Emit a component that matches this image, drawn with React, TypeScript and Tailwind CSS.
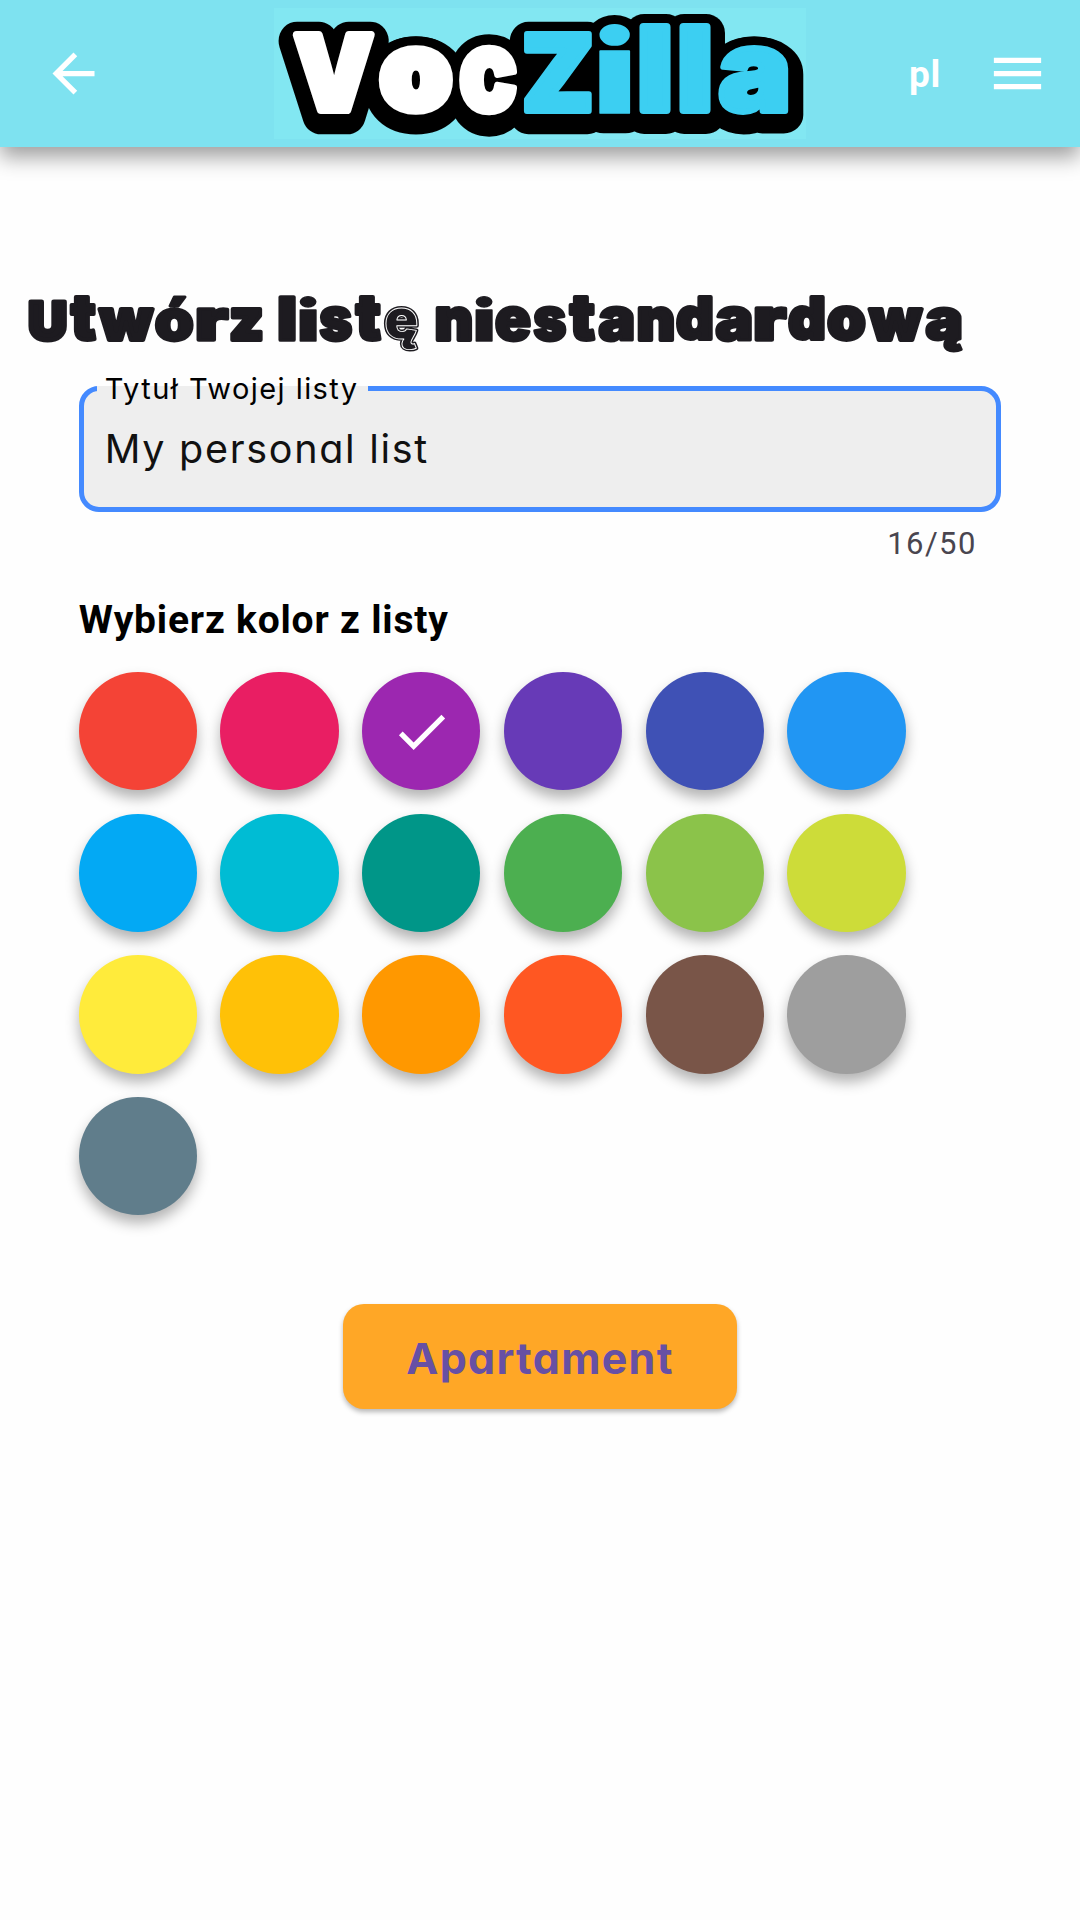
import React from "react";

type Glyph = { ch: string; box: [number, number, number, number]; fill?: string; ring?: boolean; bold?: number };

const FACE = "900 100px Inter";

/** Matrix that fits the inked area of a character into the given box. */
function fit(ch: string, [l, t, r, b]: Glyph["box"], inset: number) {
  const ctx = document.createElement("canvas").getContext("2d")!;
  ctx.font = FACE;
  const m = ctx.measureText(ch);
  const w = m.actualBoundingBoxRight + m.actualBoundingBoxLeft;
  const h = m.actualBoundingBoxAscent + m.actualBoundingBoxDescent;
  const sx = (r - l - inset * 2) / w;
  const sy = (b - t - inset * 2) / h;
  const x = l + inset + m.actualBoundingBoxLeft * sx;
  const y = t + inset + m.actualBoundingBoxAscent * sy;
  return `matrix(${sx} 0 0 ${sy} ${x} ${y})`;
}

function Letter({ g, inset, fill, stroke, width, dy = 0 }: { g: Glyph; inset: number; fill: string; stroke: string; width: number; dy?: number }) {
  return (
    <g transform={`translate(0 ${dy})`}>
      <text
        transform={fit(g.ch, g.box, inset)}
        className="font-[Inter,sans-serif] text-[100px] font-black"
        fill={fill}
        stroke={stroke}
        strokeWidth={width}
        strokeLinejoin="round"
        vectorEffect="non-scaling-stroke"
      >
        {g.ch}
      </text>
    </g>
  );
}

const BLUE = "#3ccff2";
const logo: Glyph[] = [
  { ch: "V", box: [292, 31, 375, 114], fill: "#fff", bold: 8 },
  { ch: "o", box: [378.5, 45, 453, 115], fill: "#fff", bold: 10 },
  { ch: "c", box: [458.5, 45, 517.5, 115], fill: "#fff", bold: 6 },
  { ch: "Z", box: [522.5, 31, 592, 114], fill: BLUE, bold: 6 },
  { ch: "i", box: [597.5, 23, 630, 114], fill: BLUE, bold: 2 },
  { ch: "l", box: [638, 23, 670.5, 114], fill: BLUE, bold: 8 },
  { ch: "l", box: [678, 23, 710.5, 114], fill: BLUE, bold: 8 },
  { ch: "a", box: [717.5, 45, 788, 115], fill: BLUE, bold: 6 },
];

const heading: Glyph[] = [
  { ch: "U", box: [28, 299, 67, 342], bold: 5 },
  { ch: "t", box: [69, 295, 97, 342] },
  { ch: "w", box: [97, 307, 155, 342] },
  { ch: "ó", box: [155, 295, 194, 342], bold: 3 },
  { ch: "r", box: [196, 307, 229, 342] },
  { ch: "z", box: [230, 307, 263, 342] },
  { ch: "l", box: [278, 295, 296, 342] },
  { ch: "i", box: [299, 295, 317, 342], bold: 1.5 },
  { ch: "s", box: [319, 306, 353, 342], bold: 3 },
  { ch: "t", box: [354, 295, 382, 342] },
  { ch: "ę", box: [384, 306, 419, 351], ring: true },
  { ch: "n", box: [435, 306, 472, 342] },
  { ch: "i", box: [475, 295, 493, 342], bold: 1.5 },
  { ch: "e", box: [495, 306, 531, 342], bold: 3 },
  { ch: "s", box: [533, 306, 567, 342], bold: 3 },
  { ch: "t", box: [568, 295, 596, 342] },
  { ch: "a", box: [598, 306, 634, 342], bold: 3 },
  { ch: "n", box: [637, 306, 674, 342] },
  { ch: "d", box: [676, 295, 713, 342] },
  { ch: "a", box: [715, 306, 752, 342], bold: 3 },
  { ch: "r", box: [754, 306, 787, 342] },
  { ch: "d", box: [788, 295, 825, 342] },
  { ch: "o", box: [827, 306, 866, 342] },
  { ch: "w", box: [867, 307, 924, 342] },
  { ch: "ą", box: [925, 306, 963, 352], bold: 3 },
];

function Logo() {
  return (
    <svg viewBox="273.5 8 532.5 131" className="ml-[168.5px] h-[131px] w-[532.5px] overflow-visible bg-[#82e7f2]" role="img" aria-label="VocZilla">
      {logo.map((g, i) => (
        <Letter key={i} g={g} inset={4.5} fill="#000" stroke="#000" width={38} dy={5.5} />
      ))}
      {logo.map((g, i) => (
        <Letter key={i} g={g} inset={4.5} fill="#000" stroke="#000" width={26} />
      ))}
      {logo.map((g, i) => (
        <Letter key={i} g={g} inset={g.bold! / 2} fill={g.fill!} stroke={g.fill!} width={g.bold!} />
      ))}
    </svg>
  );
}

const colors = [
  "bg-[#f44336]", "bg-[#e91e63]", "bg-[#9c27b0]", "bg-[#673ab7]", "bg-[#3f51b5]", "bg-[#2196f3]",
  "bg-[#03a9f4]", "bg-[#00bcd4]", "bg-[#009688]", "bg-[#4caf50]", "bg-[#8bc34a]", "bg-[#cddc39]",
  "bg-[#ffeb3b]", "bg-[#ffc107]", "bg-[#ff9800]", "bg-[#ff5722]", "bg-[#795548]", "bg-[#9e9e9e]",
  "bg-[#607d8b]",
];

function Icon({ d, className = "" }: { d: string; className?: string }) {
  return (
    <svg viewBox="0 0 24 24" className={`size-[63px] shrink-0 fill-white ${className}`}>
      <path d={d} />
    </svg>
  );
}

export default function App() {
  return (
    <div className="flex h-[1920px] w-[1080px] flex-col overflow-hidden bg-[#fefefe] font-[Roboto,sans-serif]">
      <header className="flex h-[147px] shrink-0 items-center bg-[#7ee2f0] pl-[42px] shadow-[0_10px_20px_rgba(0,0,0,0.38)]">
        <Icon d="M20 11H7.83l5.59-5.59L12 4l-8 8 8 8 1.41-1.41L7.83 13H20v-2z" />
        <Logo />
        <span className="ml-[103px] w-[32px] pt-[2px] text-[37px] font-bold leading-none tracking-[0.8px] text-white">pl</span>
        <Icon className="ml-[44.5px]" d="M3 18h18v-2H3v2zm0-5h18v-2H3v2zm0-7v2h18V6H3z" />
      </header>

      <main className="flex flex-col pt-[138px]">
        <h1 aria-label="Utwórz listę niestandardową">
          <svg viewBox="0 285 1080 75" className="block h-[75px] w-[1080px] overflow-visible">
            {heading.map((g, i) => (
              <React.Fragment key={i}>
                <Letter g={g} inset={(g.bold ?? 4) / 2} fill="#1d1b20" stroke="#1d1b20" width={g.bold ?? 4} />
                {g.ring && <Letter g={g} inset={2} fill="#1d1b20" stroke="#fff" width={0.9} />}
              </React.Fragment>
            ))}
          </svg>
        </h1>

        <section className="px-[78.75px] pt-[26px]">
          <div className="relative h-[126px] rounded-[20px] border-[5px] border-[#448aff] bg-[#eee]">
            <div className="absolute -top-[5px] left-[13px] flex h-[6px] w-[271px] items-center bg-[#eee] pl-[8px]">
              <label className="relative -top-[1px] whitespace-nowrap font-[Inter,sans-serif] text-[29px] font-normal leading-none tracking-[1.45px] text-black [font-feature-settings:'cv11']">
                Tytuł Twojej listy
              </label>
            </div>
            <p className="whitespace-nowrap pl-[21px] pt-[34px] font-[Inter,sans-serif] text-[39.5px] font-normal leading-[48px] tracking-[1.7px] text-[#111] [font-feature-settings:'cv11']">
              My personal list
            </p>
          </div>
          <p className="mt-[14px] pr-[24.5px] text-right text-[31px] leading-[36px] tracking-[1.4px] text-[#49454f]">16/50</p>
          <h2 className="mt-[35px] text-[39px] font-bold leading-[46px] tracking-[0.8px] text-black">Wybierz kolor z listy</h2>
          <div className="mt-[29px] grid grid-cols-[repeat(6,118.1px)] gap-[23.65px]">
            {colors.map((c, i) => (
              <div key={c} className={`flex size-[118.1px] items-center justify-center rounded-full shadow-[0_8px_14px_rgba(0,0,0,0.3)] ${c}`}>
                {i === 2 && <Icon d="M9 16.17 4.83 12l-1.42 1.41L9 19 21 7l-1.41-1.41z" />}
              </div>
            ))}
          </div>
        </section>

        <button className="mt-[89px] flex h-[105px] w-[393.5px] items-center justify-center self-center rounded-[21px] bg-[#ffa726] pt-[2px] font-[Inter,sans-serif] text-[43px] font-bold tracking-[1.3px] text-[#6750a4] shadow-[0_3px_5px_rgba(0,0,0,0.28)] [font-feature-settings:'cv11']">
          Apartament
        </button>
      </main>
    </div>
  );
}
